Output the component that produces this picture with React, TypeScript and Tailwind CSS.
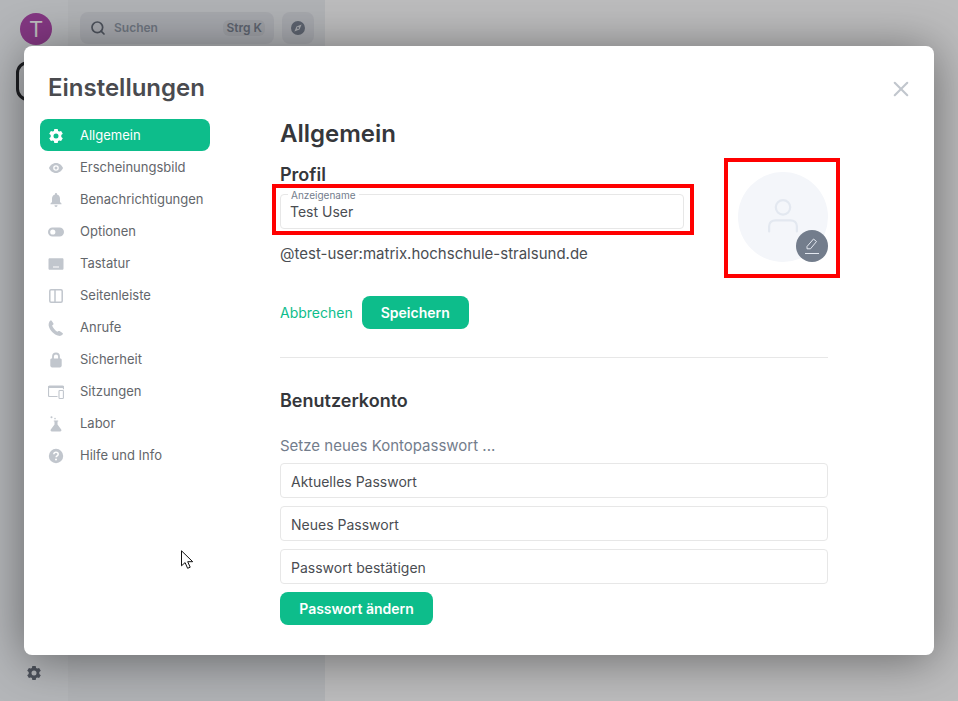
import { useState } from 'react';
import { Search, X } from 'lucide-react';

const GearIcon = ({ className }: { className: string }) => (
    <svg viewBox="0 0 16 16" className={className} fill="currentColor">
        <path
            fillRule="evenodd"
            d="M6.300 1h3.400l.4 1.900 1.100.6 1.900-.6 1.700 2.900-1.500 1.300v1.800l1.500 1.300-1.700 2.900-1.900-.6-1.100.6-.4 1.900H6.300l-.4-1.900-1.100-.6-1.900.6-1.700-2.900 1.500-1.300V7.100L1.200 5.800l1.700-2.900 1.900.6 1.100-.6L6.300 1zM8 5.500a2.500 2.500 0 100 5 2.500 2.500 0 000-5z"
        />
    </svg>
);

const EyeIcon = ({ className }: { className: string }) => (
    <svg viewBox="0 0 16 16" className={className} fill="currentColor">
        <path
            fillRule="evenodd"
            d="M8 3c3.400 0 6 2.600 7 5-1 2.400-3.600 5-7 5s-6-2.600-7-5c1-2.400 3.600-5 7-5zm0 2.200a2.800 2.800 0 100 5.600 2.800 2.800 0 000-5.600z"
        />
        <circle cx="8" cy="8" r="1.500" />
    </svg>
);

const BellIcon = ({ className }: { className: string }) => (
    <svg viewBox="0 0 16 16" className={className} fill="currentColor">
        <path d="M8 1c.6 0 1 .4 1 1v.6c1.900.5 3 2.100 3 4.100v3.300l1.500 1.600v.7h-11v-.7L4 10V6.700c0-2 1.100-3.600 3-4.100V2c0-.6.400-1 1-1z" />
        <path d="M6.500 13.200h3c0 .9-.6 1.700-1.500 1.700s-1.500-.8-1.500-1.700z" />
    </svg>
);

const ToggleIcon = ({ className }: { className: string }) => (
    <svg viewBox="0 0 16 16" className={className} fill="currentColor">
        <path
            fillRule="evenodd"
            d="M4.500 3.500h7a4.500 4.500 0 010 9h-7a4.500 4.500 0 010-9zM4.800 5.400a2.600 2.600 0 100 5.200 2.600 2.600 0 000-5.200z"
        />
    </svg>
);

const KeyboardIcon = ({ className }: { className: string }) => (
    <svg viewBox="0 0 16 16" className={className} fill="currentColor">
        <path
            fillRule="evenodd"
            d="M1.800 2.200h12.400c.8 0 1.300.5 1.300 1.300v9c0 .8-.5 1.300-1.300 1.300H1.800c-.8 0-1.300-.5-1.300-1.300v-9c0-.8.500-1.300 1.300-1.300zm3.200 8.200v1.100h6v-1.100H5z"
        />
    </svg>
);

const SidebarIcon = ({ className }: { className: string }) => (
    <svg viewBox="0 0 16 16" className={className} fill="none" stroke="currentColor" strokeWidth="1.500">
        <rect x="1.800" y="1.800" width="12.400" height="12.400" rx="1.200" />
        <path d="M7 1.800v12.400" />
    </svg>
);

const PhoneIcon = ({ className }: { className: string }) => (
    <svg viewBox="0 0 16 16" className={className} fill="currentColor">
        <path d="M2.400.6c.5-.3 1.100-.2 1.400.3l1.500 2.400c.3.500.2 1-.2 1.400l-1 .9c.5 1.500 2.900 5 5.200 6.200l1.200-.7c.5-.3 1-.2 1.400.2l2.600 1.800c.5.400.5 1 .1 1.400-1 .9-2.400 1.700-3.900 1.300C6 14.900 1.400 9.800.7 5.700.4 3.700 1.200 1.600 2.400.6z" />
    </svg>
);

const LockIcon = ({ className }: { className: string }) => (
    <svg viewBox="0 0 16 16" className={className} fill="currentColor">
        <path
            fillRule="evenodd"
            d="M8 .6a3.900 3.900 0 013.900 3.900v2h.5c.8 0 1.300.6 1.300 1.300v5.800c0 1-.8 1.800-1.800 1.800H4.100c-1 0-1.800-.8-1.800-1.800V7.800c0-.7.500-1.300 1.300-1.300h.5v-2A3.900 3.900 0 018 .6zm0 1.800a2.100 2.100 0 00-2.100 2.100v2h4.200v-2A2.100 2.100 0 008 2.400z"
        />
    </svg>
);

const SessionsIcon = ({ className }: { className: string }) => (
    <svg viewBox="0 0 16 16" className={className} fill="none" stroke="currentColor">
        <path strokeWidth="1.200" d="M9.500 12.500H1.500c-.6 0-1-.4-1-1V3.200c0-.6.400-1 1-1h13c.6 0 1 .4 1 1v2" />
        <path fill="currentColor" stroke="none" d="M.5 2h15v2H.5z" />
        <rect x="11" y="6.500" width="4.400" height="8" rx=".8" strokeWidth="1.100" />
    </svg>
);

const FlaskIcon = ({ className }: { className: string }) => (
    <svg viewBox="0 0 16 16" className={className} fill="currentColor">
        <circle cx="3.500" cy="1.300" r="1" />
        <circle cx="7" cy="2.600" r=".8" />
        <path d="M5.800 4.500h4.400v1h-.7v3l3.700 5.100c.7.900 0 2-1 2H3.800c-1 0-1.700-1.100-1-2l3.700-5.100v-3h-.7v-1z" />
    </svg>
);

const HelpIcon = ({ className }: { className: string }) => (
    <svg viewBox="0 0 16 16" className={className}>
        <circle cx="8" cy="8" r="7.200" fill="currentColor" />
        <path d="M5.800 6.300C5.900 5 6.800 4.300 8 4.300s2.200.8 2.200 1.900c0 1.600-2.100 1.700-2.100 3.100" fill="none" stroke="#fff" strokeWidth="1.500" />
        <circle cx="8" cy="11.400" r="1" fill="#fff" />
    </svg>
);

// solid round compass, the needle is cut out of the disc
const CompassDisc = ({ className }: { className: string }) => (
    <svg viewBox="0 0 16 16" className={className} fill="currentColor">
        <path
            fillRule="evenodd"
            d="M8 1a7 7 0 110 14A7 7 0 018 1zm3.600 3.400L6.500 6.500 4.400 11.600l5.100-2.100 2.100-5.100zM8 7a1 1 0 110 2 1 1 0 010-2z"
        />
    </svg>
);

const tabs = [
    { name: 'Allgemein', icon: GearIcon },
    { name: 'Erscheinungsbild', icon: EyeIcon },
    { name: 'Benachrichtigungen', icon: BellIcon },
    { name: 'Optionen', icon: ToggleIcon },
    { name: 'Tastatur', icon: KeyboardIcon },
    { name: 'Seitenleiste', icon: SidebarIcon },
    { name: 'Anrufe', icon: PhoneIcon },
    { name: 'Sicherheit', icon: LockIcon },
    { name: 'Sitzungen', icon: SessionsIcon },
    { name: 'Labor', icon: FlaskIcon },
    { name: 'Hilfe und Info', icon: HelpIcon },
];

const passwordFields = ['Aktuelles Passwort', 'Neues Passwort', 'Passwort bestätigen'];

export default function App() {
    const [activeTab, setActiveTab] = useState('Allgemein');
    const [displayName, setDisplayName] = useState('Test User');

    return (
        <div className="relative flex h-[701px] w-[958px] overflow-hidden bg-white font-['Inter',sans-serif]">
            {/* app behind the dialog */}
            <div className="flex w-[68px] flex-col items-center bg-[#f4f6fa] pt-[13px] pb-[20px]">
                <div className="ml-1 flex h-8 w-8 items-center justify-center rounded-full bg-[#ac3ba8] text-[22px] leading-none text-white">
                    T
                </div>
                <div className="mt-[16px] ml-1 h-10 w-10 rounded-xl border-[3px] border-[#17191c]" />
                <div className="flex-1" />
                <GearIcon className="h-4 w-4 text-[#5c6470]" />
            </div>
            <div className="flex w-[257px] items-start gap-2 bg-[#eef0f4] pt-3 pl-3 pr-[11px]">
                <div className="flex h-8 w-[194px] items-center rounded-lg bg-[#dfe2e8] pl-[10px] pr-[9px]">
                    <Search size={16} strokeWidth={2.6} className="text-[#5c6470]" />
                    <span className="ml-2 flex-1 text-xs font-semibold text-[#8d97a5]">Suchen</span>
                    <span className="rounded-md bg-[#d3d6dc] px-[3px] text-xs font-semibold text-[#737d8c]">Strg K</span>
                </div>
                <div className="flex h-8 w-8 items-center justify-center rounded-lg bg-[#dfe2e8]">
                    <CompassDisc className="h-4 w-4 text-[#737d8c]" />
                </div>
            </div>
            <div className="flex-1 bg-white" />

            <div className="absolute inset-0 bg-[#2e2f32]/32" />

            {/* settings dialog */}
            <div className="absolute top-[46px] left-[24px] h-[609px] w-[910px] rounded-lg bg-white shadow-[0_4px_48px_rgba(0,0,0,0.45)]">
                <h1 className="absolute top-[26px] left-[24px] text-2xl leading-[32px] font-semibold text-[#4a4b4f]">
                    Einstellungen
                </h1>
                <button className="absolute top-[33px] right-[23px] text-[#c1c6cd]">
                    <X size={20} strokeWidth={2} className="scale-125" />
                </button>

                <div className="flex pt-[73px]">
                    <nav className="ml-4 w-[170px] shrink-0">
                        {tabs.map((tab) => {
                            const Icon = tab.icon;
                            const isActive = tab.name === activeTab;
                            return (
                                <button
                                    key={tab.name}
                                    onClick={() => setActiveTab(tab.name)}
                                    className={`flex h-8 w-full items-center rounded-lg pt-[2px] pl-2 text-left text-[13px] ${
                                        isActive ? 'bg-[#0dbd8b] text-white' : 'text-[#63666b]'
                                    }`}
                                >
                                    <Icon className={`h-4 w-4 ${isActive ? 'text-white' : 'text-[#c1c6cd]'}`} />
                                    <span className="ml-4">{tab.name}</span>
                                </button>
                            );
                        })}
                    </nav>

                    <div className="ml-[70px] w-[548px]">
                        <h2 className="text-2xl leading-[30px] font-semibold text-[#35373b]">Allgemein</h2>

                        <div className="mt-[15px] flex justify-between">
                            <div className="w-[404px]">
                                <h3 className="text-lg leading-[22px] font-semibold text-[#35373b]">Profil</h3>
                                <div className="relative mt-[8px] h-[35px] rounded border border-[#e7e7e7]">
                                    <span className="absolute -top-[5px] left-[7px] bg-white px-[3px] text-[10px] leading-[10px] text-[#737d8c]">
                                        Anzeigename
                                    </span>
                                    <input
                                        value={displayName}
                                        onChange={(e) => setDisplayName(e.target.value)}
                                        className="h-full w-full bg-transparent px-[9px] text-sm text-[#4a4d52] outline-none"
                                    />
                                </div>
                                <p className="mt-[15px] text-[15px] leading-5 text-[#4a4d52]">
                                    @test-user:matrix.hochschule-stralsund.de
                                </p>
                            </div>

                            <div className="relative mt-[8px] h-[90px] w-[90px] rounded-full bg-[#f4f6fa]">
                                <svg viewBox="0 0 34 40" className="absolute top-[27px] left-[29px] h-[37px] w-8" fill="none" stroke="#e3e8f0" strokeWidth="2.400">
                                    <circle cx="17" cy="9" r="7.800" />
                                    <path d="M2 35v-5.500C2 25.500 5 23 9 23h16c4 0 7 2.500 7 6.500V35" strokeLinecap="round" />
                                </svg>
                                <div className="absolute right-0 bottom-0 flex h-8 w-8 items-center justify-center rounded-full bg-[#737d8c]">
                                    <svg viewBox="0 0 16 16" className="h-4 w-4" fill="none" stroke="#e3e8f0" strokeWidth="1">
                                        <path d="M3 8.500L9.500 1l3 2.500-6 7.300H3z" strokeLinejoin="round" />
                                        <path d="M1 15.500h14" />
                                    </svg>
                                </div>
                            </div>
                        </div>

                        <div className="mt-[32px] flex items-center gap-[9px]">
                            <button className="text-sm text-[#0dbd8b]">Abbrechen</button>
                            <button className="h-[33px] w-[107px] rounded-lg bg-[#0dbd8b] text-sm font-semibold text-white">
                                Speichern
                            </button>
                        </div>

                        <div className="mt-[28px] h-px bg-[#e7e7e7]" />

                        <h3 className="mt-[32px] text-lg leading-[22px] font-semibold text-[#35373b]">Benutzerkonto</h3>
                        <p className="mt-[24px] text-[15px] leading-5 text-[#737d8c]">Setze neues Kontopasswort ...</p>

                        <div className="mt-[7px] flex flex-col gap-2">
                            {passwordFields.map((field) => (
                                <input
                                    key={field}
                                    placeholder={field}
                                    className="h-[35px] w-full rounded border border-[#e7e7e7] px-[10px] pt-[2px] text-sm text-[#4a4d52] outline-none placeholder:text-[#4a4d52]"
                                />
                            ))}
                        </div>

                        <button className="mt-2 h-[33px] w-[153px] rounded-lg bg-[#0dbd8b] text-sm font-semibold text-white">
                            Passwort ändern
                        </button>
                    </div>
                </div>
            </div>

            {/* annotations on the screenshot */}
            <div className="absolute top-[184px] left-[272px] h-[51px] w-[422px] border-4 border-[#ff0000]" />
            <div className="absolute top-[158px] left-[724px] h-[120px] w-[116px] border-4 border-[#ff0000]" />

            {/* mouse cursor */}
            <svg viewBox="0 0 13 20" className="absolute top-[550px] left-[181px] h-5 w-[13px]">
                <path d="M.5.8v15l3.600-3.200 2.500 5.700 2.600-1.100-2.500-5.500h5L.5.800z" fill="#fff" stroke="#111" strokeWidth="1" />
            </svg>
        </div>
    );
}
